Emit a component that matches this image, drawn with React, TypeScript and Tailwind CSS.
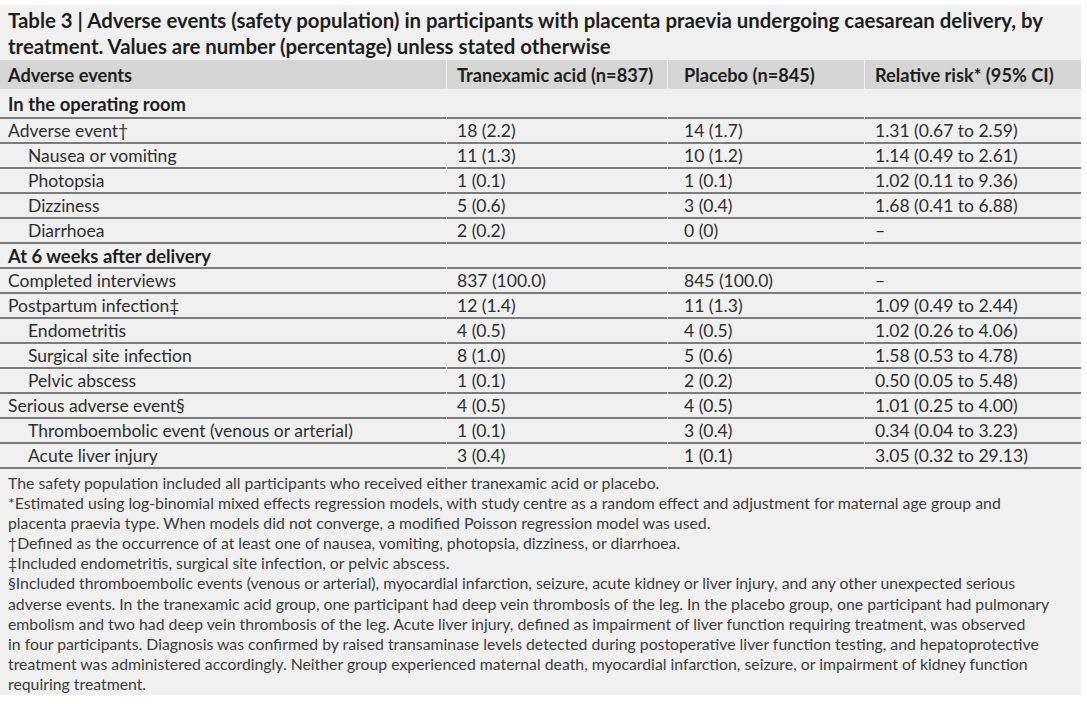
import React from "react";

type Row = { label: string; a: string; b: string; rr: string; indent?: boolean; section?: boolean };

const rows: Row[] = [
  { label: "In the operating room", a: "", b: "", rr: "", section: true },
  { label: "Adverse event†", a: "18 (2.2)", b: "14 (1.7)", rr: "1.31 (0.67 to 2.59)" },
  { label: "Nausea or vomiting", a: "11 (1.3)", b: "10 (1.2)", rr: "1.14 (0.49 to 2.61)", indent: true },
  { label: "Photopsia", a: "1 (0.1)", b: "1 (0.1)", rr: "1.02 (0.11 to 9.36)", indent: true },
  { label: "Dizziness", a: "5 (0.6)", b: "3 (0.4)", rr: "1.68 (0.41 to 6.88)", indent: true },
  { label: "Diarrhoea", a: "2 (0.2)", b: "0 (0)", rr: "–", indent: true },
  { label: "At 6 weeks after delivery", a: "", b: "", rr: "", section: true },
  { label: "Completed interviews", a: "837 (100.0)", b: "845 (100.0)", rr: "–" },
  { label: "Postpartum infection‡", a: "12 (1.4)", b: "11 (1.3)", rr: "1.09 (0.49 to 2.44)" },
  { label: "Endometritis", a: "4 (0.5)", b: "4 (0.5)", rr: "1.02 (0.26 to 4.06)", indent: true },
  { label: "Surgical site infection", a: "8 (1.0)", b: "5 (0.6)", rr: "1.58 (0.53 to 4.78)", indent: true },
  { label: "Pelvic abscess", a: "1 (0.1)", b: "2 (0.2)", rr: "0.50 (0.05 to 5.48)", indent: true },
  { label: "Serious adverse event§", a: "4 (0.5)", b: "4 (0.5)", rr: "1.01 (0.25 to 4.00)" },
  { label: "Thromboembolic event (venous or arterial)", a: "1 (0.1)", b: "3 (0.4)", rr: "0.34 (0.04 to 3.23)", indent: true },
  { label: "Acute liver injury", a: "3 (0.4)", b: "1 (0.1)", rr: "3.05 (0.32 to 29.13)", indent: true },
];

const noteLines = [
  "The safety population included all participants who received either tranexamic acid or placebo.",
  "*Estimated using log-binomial mixed effects regression models, with study centre as a random effect and adjustment for maternal age group and",
  "placenta praevia type. When models did not converge, a modified Poisson regression model was used.",
  "†Defined as the occurrence of at least one of nausea, vomiting, photopsia, dizziness, or diarrhoea.",
  "‡Included endometritis, surgical site infection, or pelvic abscess.",
  "§Included thromboembolic events (venous or arterial), myocardial infarction, seizure, acute kidney or liver injury, and any other unexpected serious",
  "adverse events. In the tranexamic acid group, one participant had deep vein thrombosis of the leg. In the placebo group, one participant had pulmonary",
  "embolism and two had deep vein thrombosis of the leg. Acute liver injury, defined as impairment of liver function requiring treatment, was observed",
  "in four participants. Diagnosis was confirmed by raised transaminase levels detected during postoperative liver function testing, and hepatoprotective",
  "treatment was administered accordingly. Neither group experienced maternal death, myocardial infarction, seizure, or impairment of kidney function",
  "requiring treatment.",
];

export default function App() {
  return (
    <div className="w-[1087px] h-[704px] bg-white pt-[5px] font-['Lato',sans-serif]">
      <div className="w-[1081px] bg-[#f0f0f0]">
        <h1 className="pt-[2px] pl-[8px] pr-[20px] text-[20.4px] leading-[26px] font-bold text-[#1e1e1e]">
          Table 3 | Adverse events (safety population) in participants with placenta praevia undergoing caesarean delivery, by treatment. Values are number (percentage) unless stated otherwise
        </h1>
        <div className="mt-px grid grid-cols-[446px_220px_196px_1fr] gap-x-px text-[17.5px] text-[#2e2e2e]">
          <div className="h-[29px] flex items-center pt-[2px] pl-[8px] bg-[#d6d6d6] text-[18.2px] font-bold text-[#1e1e1e]">Adverse events</div>
          <div className="h-[29px] flex items-center pt-[2px] pl-[10px] bg-[#d6d6d6] text-[18.2px] font-bold text-[#1e1e1e]">Tranexamic acid (n=837)</div>
          <div className="h-[29px] flex items-center pt-[2px] pl-[16px] bg-[#d6d6d6] text-[18.2px] font-bold text-[#1e1e1e]">Placebo (n=845)</div>
          <div className="h-[29px] flex items-center pt-[2px] pl-[10px] bg-[#d6d6d6] text-[18.2px] font-bold text-[#1e1e1e]">Relative risk* (95% CI)</div>
          {rows.map((r, i) =>
            r.section ? (
              <React.Fragment key={i}>
                <div className={`${i === 0 ? "h-[30px] pt-[4px]" : "h-[25px] pt-[2px]"} flex items-center pl-[8px] border-b-2 border-[#7c7c7c] text-[18.4px] font-bold text-[#1e1e1e]`}>{r.label}</div>
                <div className={`${i === 0 ? "h-[30px]" : "h-[25px]"} border-b-2 border-[#7c7c7c]`} />
                <div className={`${i === 0 ? "h-[30px]" : "h-[25px]"} border-b-2 border-[#7c7c7c]`} />
                <div className={`${i === 0 ? "h-[30px]" : "h-[25px]"} border-b-2 border-[#7c7c7c]`} />
              </React.Fragment>
            ) : (
              <React.Fragment key={i}>
                <div className={`h-[25px] flex items-center pt-[2px] ${r.indent ? "pl-[28px]" : "pl-[8px]"} border-b-2 border-[#7c7c7c]`}>{r.label}</div>
                <div className="h-[25px] flex items-center pt-[2px] pl-[10px] border-b-2 border-[#7c7c7c]">{r.a}</div>
                <div className="h-[25px] flex items-center pt-[2px] pl-[16px] border-b-2 border-[#7c7c7c]">{r.b}</div>
                <div className="h-[25px] flex items-center pt-[2px] pl-[10px] border-b-2 border-[#7c7c7c]">{r.rr}</div>
              </React.Fragment>
            )
          )}
        </div>
        <div className="pt-[4px] pb-[1px] pl-[8px] text-[15.8px] leading-[20.1px] text-[#3c3c3c]">
          {noteLines.map((n, i) => (
            <p key={i} className="whitespace-nowrap">{n}</p>
          ))}
        </div>
      </div>
    </div>
  );
}
